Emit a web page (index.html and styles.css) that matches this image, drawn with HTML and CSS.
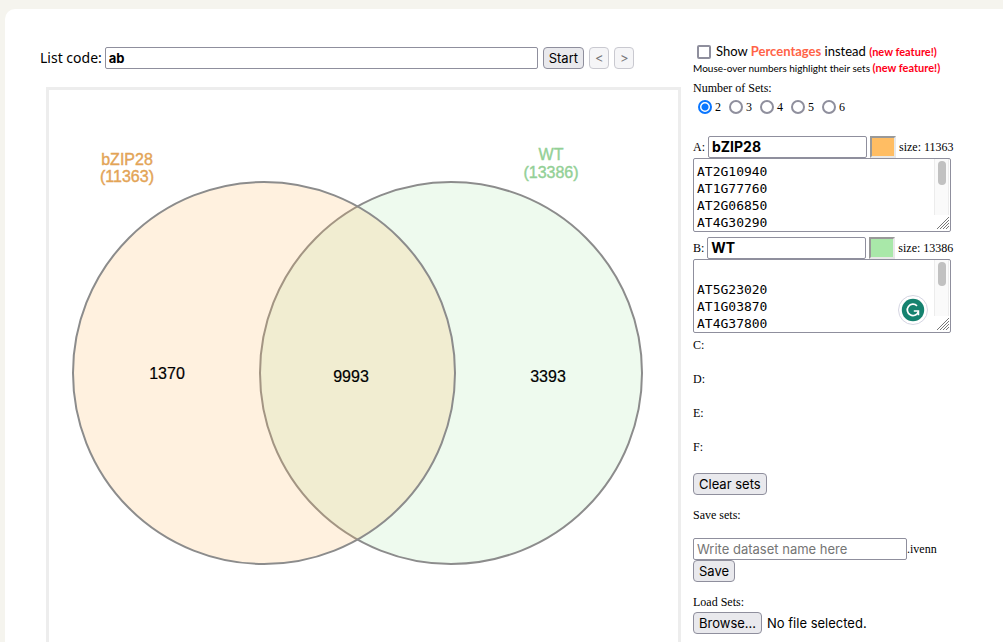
FILE: index.html
```html
<!DOCTYPE html>
<html lang="en">
<head>
<meta charset="utf-8">
<title>Venn diagram lists</title>
<link rel="stylesheet" href="styles.css">
</head>
<body>
<main class="card">
  <section class="diagram">
    <form class="code-bar">
      <label class="code-label" for="code">List code:</label>
      <input class="field code-field" id="code" type="text" value="ab">
      <button class="btn" type="button">Start</button>
      <button class="btn step" type="button" disabled>&lt;</button>
      <button class="btn step" type="button" disabled>&gt;</button>
    </form>
    <div class="frame">
      <svg class="venn" viewBox="0 0 629 552" role="img" aria-label="Venn diagram of bZIP28 and WT">
        <circle class="set-b" cx="402" cy="283" r="191"/>
        <circle class="set-a" cx="215" cy="283" r="191"/>
        <g class="name name-a"><text x="78" y="75">bZIP28</text><text x="78" y="92">(11363)</text></g>
        <g class="name name-b"><text x="502" y="70">WT</text><text x="502" y="88">(13386)</text></g>
        <g class="count">
          <text x="118" y="289">1370</text>
          <text x="302" y="292">9993</text>
          <text x="499" y="292">3393</text>
        </g>
      </svg>
    </div>
  </section>

  <aside class="panel">
    <div class="percent-row">
      <input class="check" type="checkbox" id="pct">
      <label for="pct">Show <b class="coral">Percentages</b> instead <b class="new">(new feature!)</b></label>
    </div>
    <p class="hint">Mouse-over numbers highlight their sets <b class="new">(new feature!)</b></p>
    <fieldset class="sets-count">
      <legend>Number of Sets:</legend>
      <div class="radios">
        <label><input type="radio" name="n" checked>2</label>
        <label><input type="radio" name="n">3</label>
        <label><input type="radio" name="n">4</label>
        <label><input type="radio" name="n">5</label>
        <label><input type="radio" name="n">6</label>
      </div>
    </fieldset>

    <div class="set">
      <div class="set-head">
        <label for="name-a">A:</label>
        <input class="field set-name" id="name-a" type="text" value="bZIP28">
        <button class="swatch swatch-a" type="button" aria-label="Color of set A"></button>
        <span>size: 11363</span>
      </div>
      <div class="list">
        <textarea class="genes" aria-label="Elements of set A" spellcheck="false">AT2G10940
AT1G77760
AT2G06850
AT4G30290</textarea>
        <span class="track"><span class="thumb"></span></span>
        <svg class="grip" viewBox="0 0 14 14"><path d="M1 13L13 1M4 13L13 4M7 13L13 7M10 13L13 10"/></svg>
      </div>
    </div>

    <div class="set">
      <div class="set-head">
        <label for="name-b">B:</label>
        <input class="field set-name" id="name-b" type="text" value="WT">
        <button class="swatch swatch-b" type="button" aria-label="Color of set B"></button>
        <span>size: 13386</span>
      </div>
      <div class="list">
        <textarea class="genes" aria-label="Elements of set B" spellcheck="false">

AT5G23020
AT1G03870
AT4G37800</textarea>
        <span class="track"><span class="thumb"></span></span>
        <svg class="grip" viewBox="0 0 14 14"><path d="M1 13L13 1M4 13L13 4M7 13L13 7M10 13L13 10"/></svg>
        <svg class="checker" viewBox="0 0 30 30">
          <circle cx="15" cy="15" r="14.500" fill="#fff" stroke="#d5d5e2"/>
          <circle cx="15" cy="15" r="11.200" fill="#15826f"/>
          <path d="M19 10.800A5.700 5.700 0 1 0 20.300 17" fill="none" stroke="#fff" stroke-width="1.700"/>
          <path d="M15.800 16H20.400V20.300" fill="none" stroke="#fff" stroke-width="1.700"/>
        </svg>
      </div>
    </div>

    <div class="unused">
      <span>C:</span>
      <span>D:</span>
      <span>E:</span>
      <span>F:</span>
    </div>

    <button class="btn" type="button">Clear sets</button>

    <label class="caption save-caption" for="dataset">Save sets:</label>
    <div class="save-row">
      <input class="field dataset" id="dataset" type="text" placeholder="Write dataset name here"><span>.ivenn</span>
    </div>
    <button class="btn" type="button">Save</button>

    <span class="caption load-caption">Load Sets:</span>
    <div class="file-row">
      <label class="btn" for="file">Browse…</label>
      <input class="file" id="file" type="file">
      <span>No file selected.</span>
    </div>
  </aside>
</main>
</body>
</html>
```
FILE: styles.css
```css
* { box-sizing: border-box; }

body {
  margin: 0;
  padding: 9px 0 0 5px;
  background: #f5f4ee;
  color: #000;
  font: 12px/16px "Liberation Serif", serif;
}

.card {
  display: grid;
  grid-template-columns: minmax(0, 1fr) 310px;
  gap: 12px;
  min-height: calc(100vh - 9px);
  padding: 34px 0 0 35px;
  background: #fff;
  border-radius: 10px 0 0 0;
}

.diagram {
  display: flex;
  flex-direction: column;
  gap: 18px;
  padding-top: 4px;
}

.code-bar {
  display: flex;
  align-items: center;
  gap: 5px;
  padding-right: 47px;
}

.code-label {
  margin-right: -2px;
  font: 14px/22px "Noto Sans", sans-serif;
  white-space: nowrap;
}

.field {
  height: 22px;
  min-width: 0;
  margin: 0;
  padding: 0 3px;
  border: 1px solid #8f8f9d;
  border-radius: 2px;
  background: #fff;
  color: #000;
  font: 13px/20px Inter, sans-serif;
}

.field::placeholder { color: #757575; }

.code-field {
  flex: 1;
  font-weight: 700;
}

.btn {
  display: block;
  height: 22px;
  margin: 0;
  padding: 0 5px;
  border: 1px solid #8f8f9d;
  border-radius: 4px;
  background: #e9e9ed;
  color: #000;
  font: 13px/20px Inter, sans-serif;
  white-space: nowrap;
}

.step {
  width: 20px;
  border-color: #c9c9d0;
  background: #f5f5f7;
  color: #777;
}

.frame {
  flex: 1;
  margin-left: 6px;
  border: 3px solid #ededed;
  border-bottom: 0;
}

.venn {
  display: block;
  width: 100%;
}

.venn circle {
  stroke: #8c8c8c;
  stroke-width: 2;
}

.set-a { fill: #ffb85f; fill-opacity: .2; }
.set-b { fill: #a9e8a9; fill-opacity: .2; }

.venn text {
  font: 16px "Liberation Sans", sans-serif;
  text-anchor: middle;
}

.name text { stroke-width: .4px; }
.name-a { fill: #e3a456; stroke: #e3a456; }
.name-b { fill: #93d096; stroke: #93d096; }
.count { stroke: #000; stroke-width: .2px; }

.panel {
  display: flex;
  flex-direction: column;
  align-items: flex-start;
}

.percent-row {
  display: flex;
  align-items: center;
  gap: 5px;
  height: 17px;
  padding-left: 4px;
  font: 13px/17px Lato, sans-serif;
  white-space: nowrap;
}

.check {
  appearance: none;
  width: 14px;
  height: 14px;
  margin: 0;
  border: 2px solid #8f8f9d;
  border-radius: 2px;
  background: #fff;
}

.coral { color: #ff6347; }
.new { color: #ff0018; font-size: 11px; }

.hint {
  margin: 0;
  font: 10px/16px Lato, sans-serif;
  white-space: nowrap;
}

.sets-count {
  margin: 4px 0 0;
  padding: 0;
  border: 0;
}

.sets-count legend { padding: 0; }

.radios {
  display: flex;
  gap: 8px;
  height: 22px;
  padding-left: 5px;
}

.radios label {
  display: flex;
  align-items: center;
  gap: 3px;
}

.radios input {
  appearance: none;
  width: 14px;
  height: 14px;
  margin: 0;
  border: 2px solid #8f8f9d;
  border-radius: 50%;
}

.radios input:checked {
  border-color: #0a76ff;
  background: radial-gradient(circle, #0a76ff 3px, #fff 4px);
}

.set {
  width: 262px;
  margin-bottom: 4px;
}

.sets-count + .set { margin-top: 17px; }

.set-head {
  display: flex;
  align-items: center;
  gap: 3px;
  height: 23px;
  white-space: nowrap;
}

.set-name {
  width: 159px;
  font-size: 14px;
  font-weight: 700;
}

.swatch {
  width: 26px;
  height: 22px;
  padding: 0;
  border: 2px solid;
  border-color: #999 #e8e8e8 #e8e8e8 #999;
}

.swatch-a { background: #ffbd63; }
.swatch-b { background: #a9e8a9; }

.list {
  position: relative;
  width: 258px;
}

.genes {
  display: block;
  width: 100%;
  height: 74px;
  margin: 0;
  padding: 4px 3px 0;
  overflow: hidden;
  resize: none;
  border: 1px solid #8f8f9d;
  border-radius: 2px;
  color: #000;
  font: 13px/17px "DejaVu Sans Mono", monospace;
}

.track {
  position: absolute;
  top: 1px;
  right: 2px;
  width: 15px;
  height: 56px;
  border: solid #ececec;
  border-width: 0 1px;
  background: #fafafa;
}

.thumb {
  display: block;
  width: 8px;
  height: 24px;
  margin: 2px 0 0 3px;
  border-radius: 4px;
  background: #c1c1c1;
}

.grip {
  position: absolute;
  right: 1px;
  bottom: 2px;
  width: 14px;
  height: 14px;
  fill: none;
  stroke: #777;
}

.checker {
  position: absolute;
  right: 23px;
  bottom: 8px;
  width: 30px;
  height: 30px;
}

.unused {
  display: grid;
  gap: 18px;
  margin-bottom: 18px;
}

.caption { display: block; }
.save-caption { margin: 12px 0 15px; }
.load-caption { margin: 12px 0 2px; }

.save-row {
  display: flex;
  align-items: center;
}

.dataset { width: 214px; }

.file-row {
  position: relative;
  display: flex;
  align-items: center;
  gap: 5px;
  font: 13px/22px Inter, sans-serif;
}

.file {
  position: absolute;
  width: 1px;
  height: 1px;
  opacity: 0;
}
```
